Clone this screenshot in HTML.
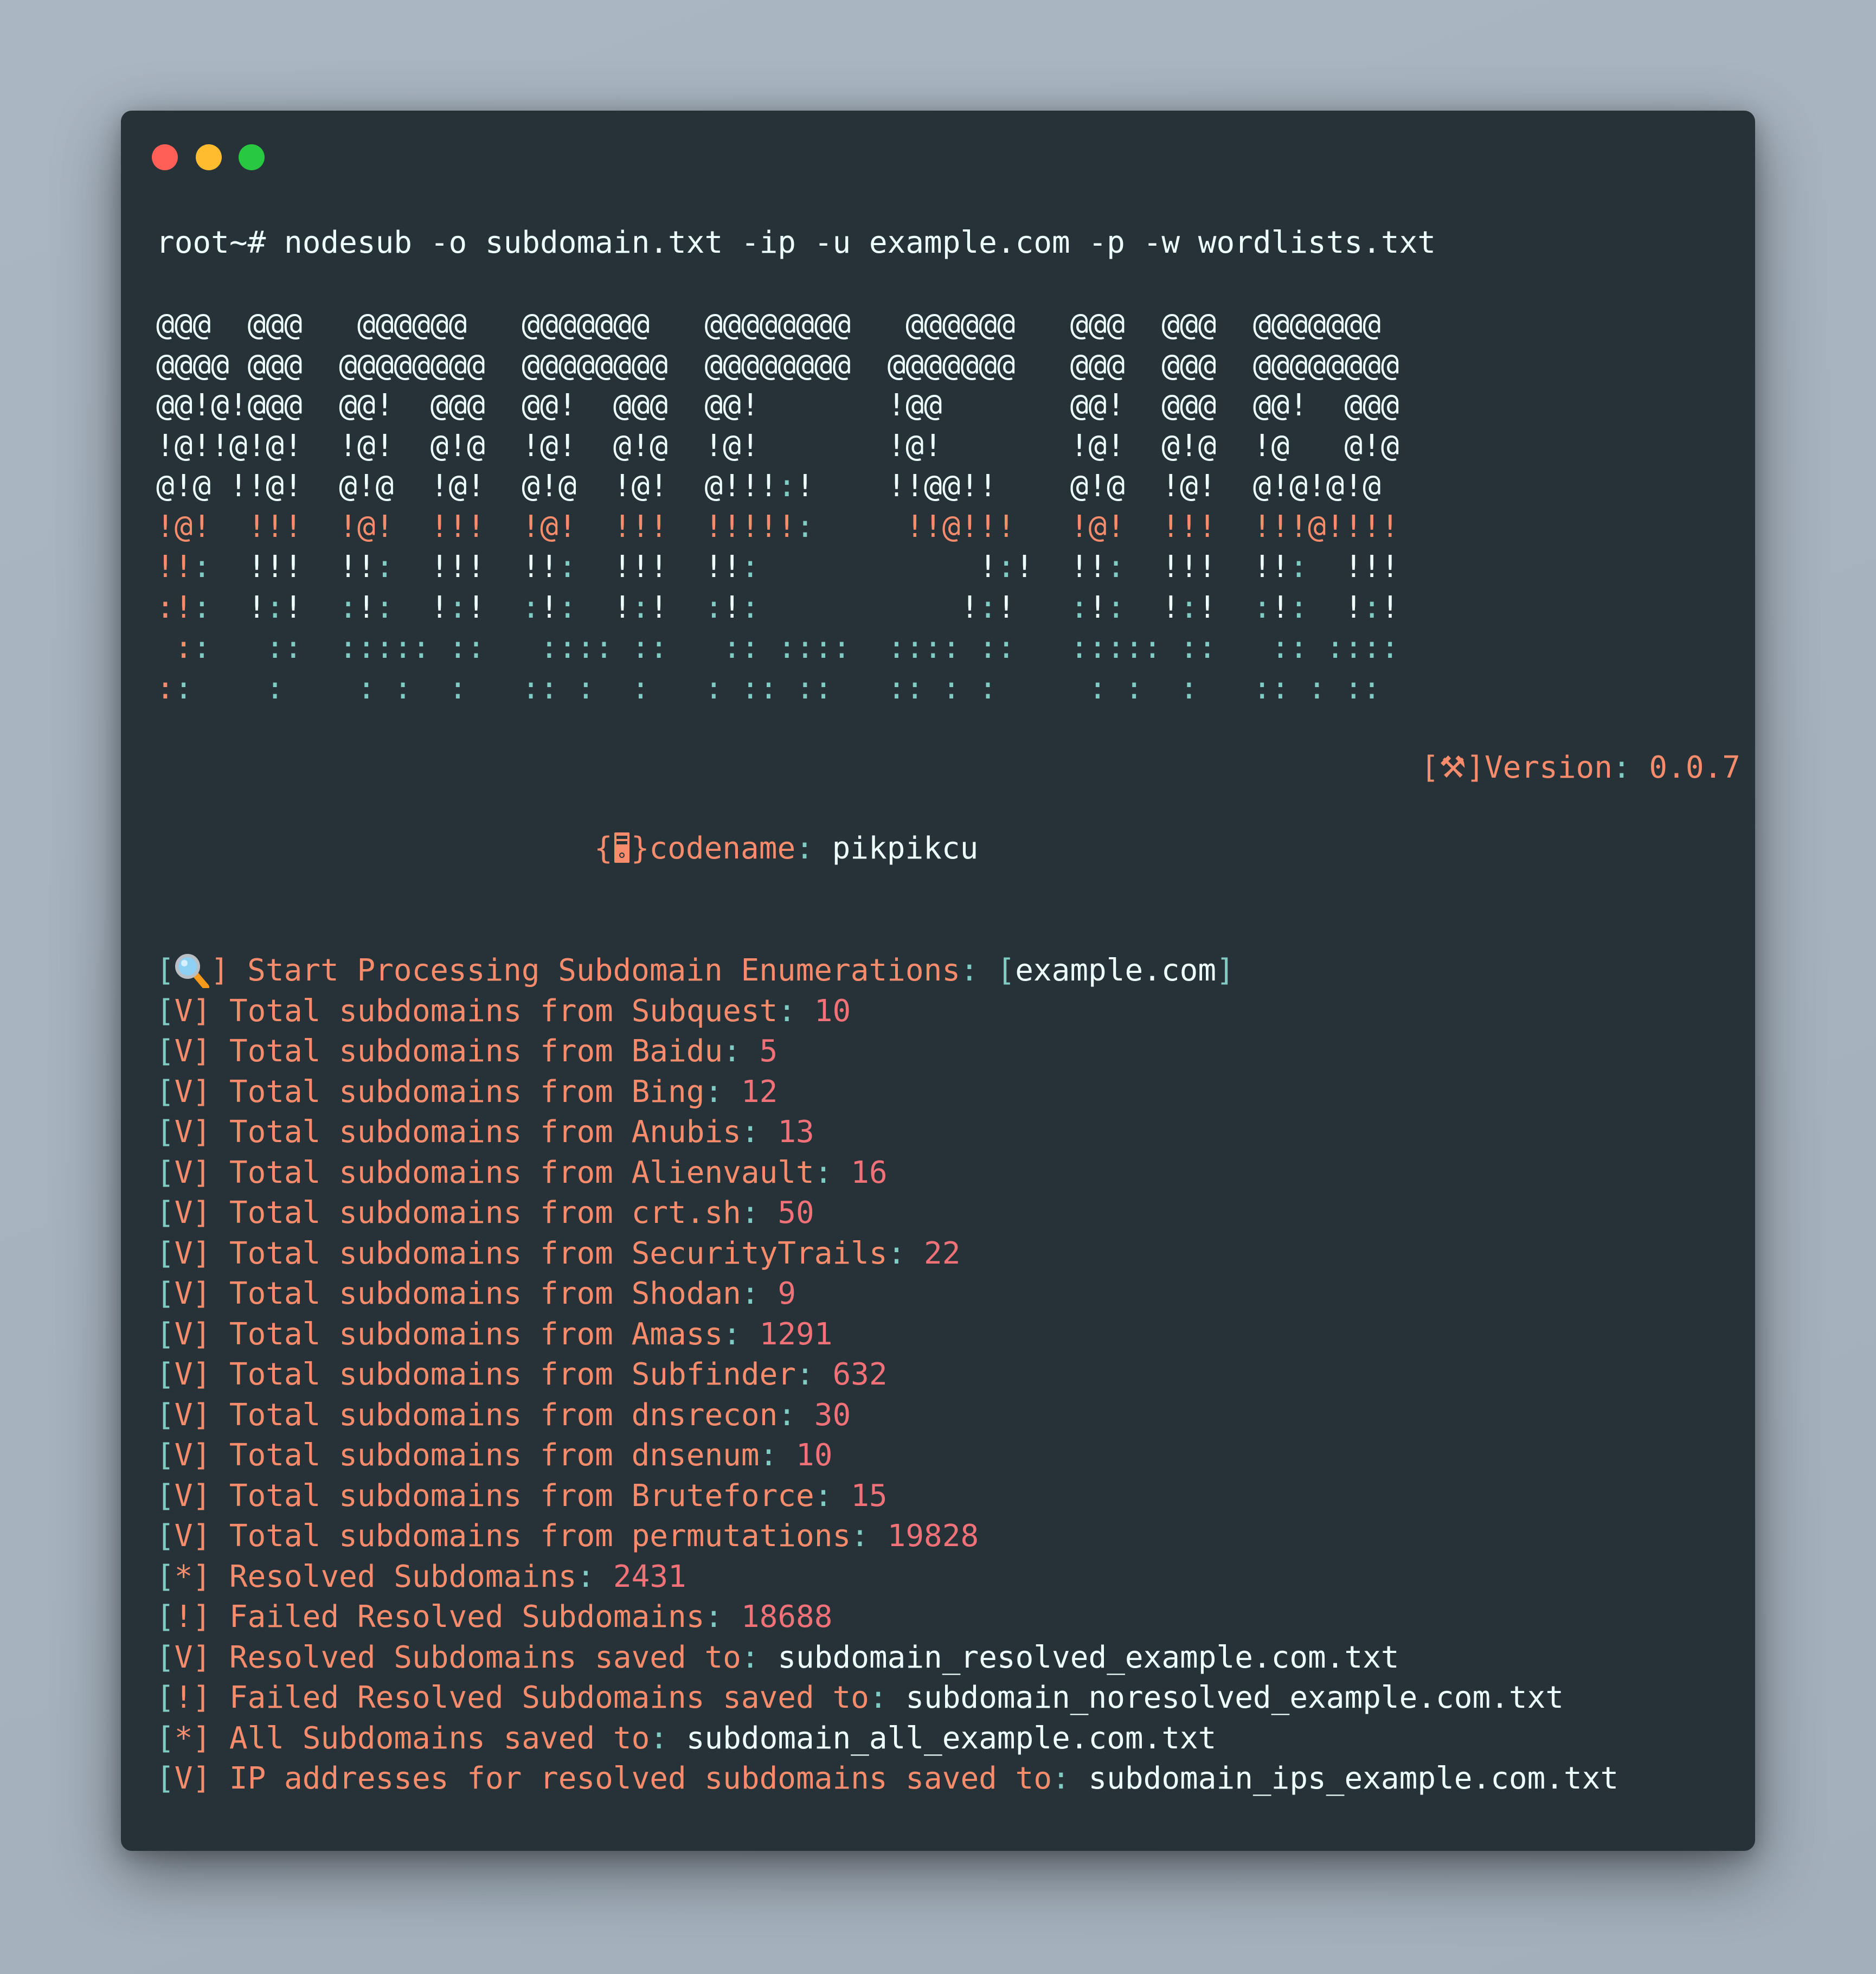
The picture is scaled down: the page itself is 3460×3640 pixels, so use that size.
<!DOCTYPE html>
<html><head><meta charset="utf-8"><style>
html,body{margin:0;padding:0}
body{width:3460px;height:3640px;background:linear-gradient(160deg,#aab6c2 0%,#a3afbb 100%);position:relative;overflow:hidden;font-family:"DejaVu Sans Mono","Liberation Mono",monospace;font-size:56px;}
.win{position:absolute;left:223px;top:204px;width:3014px;height:3209px;background:#263238;border-radius:20px;box-shadow:0 40px 120px rgba(0,0,0,0.45),0 10px 40px rgba(0,0,0,0.25);}
.dot{position:absolute;width:48px;height:48px;border-radius:50%;top:266px}
.t{position:absolute;white-space:pre;line-height:74.5px;color:#EEFFFF;}
.o{color:#F78C6C}.c{color:#80CBC4}.n{color:#F07178}.w{color:#EEFFFF}
</style></head><body>
<div class="win"></div>
<div class="dot" style="left:280px;background:#FF5F57"></div>
<div class="dot" style="left:361px;background:#FEBC2E"></div>
<div class="dot" style="left:440px;background:#28C840"></div>

<div class="t" style="left:288px;top:411px">root~# nodesub -o subdomain.txt -ip -u example.com -p -w wordlists.txt</div>

<div class="t" style="left:288px;top:562px">@@@  @@@   @@@@@@   @@@@@@@   @@@@@@@@   @@@@@@   @@@  @@@  @@@@@@@
@@@@ @@@  @@@@@@@@  @@@@@@@@  @@@@@@@@  @@@@@@@   @@@  @@@  @@@@@@@@
@@!@!@@@  @@!  @@@  @@!  @@@  @@!       !@@       @@!  @@@  @@!  @@@
!@!!@!@!  !@!  @!@  !@!  @!@  !@!       !@!       !@!  @!@  !@   @!@
@!@ !!@!  @!@  !@!  @!@  !@!  @!!!<span class="c">:</span>!    !!@@!!    @!@  !@!  @!@!@!@
<span class="o">!@!  !!!  !@!  !!!  !@!  !!!  !!!!!</span><span class="c">:</span><span class="o">     !!@!!!   !@!  !!!  !!!@!!!!</span>
<span class="o">!!</span><span class="c">:</span>  !!!  !!<span class="c">:</span>  !!!  !!<span class="c">:</span>  !!!  !!<span class="c">:</span>            !<span class="c">:</span>!  !!<span class="c">:</span>  !!!  !!<span class="c">:</span>  !!!
<span class="o">:!</span><span class="c">:</span>  !<span class="c">:</span>!  <span class="c">:</span>!<span class="c">:</span>  !<span class="c">:</span>!  <span class="c">:</span>!<span class="c">:</span>  !<span class="c">:</span>!  <span class="c">:</span>!<span class="c">:</span>           !<span class="c">:</span>!   <span class="c">:</span>!<span class="c">:</span>  !<span class="c">:</span>!  <span class="c">:</span>!<span class="c">:</span>  !<span class="c">:</span>!
 <span class="o">:</span><span class="c">:   ::  ::::: ::   :::: ::   :: ::::  :::: ::   ::::: ::   :: ::::</span>
<span class="o">:</span><span class="c">:    :    : :  :   :: :  :   : :: ::   :: : :     : :  :   :: : ::</span></div>

<div class="t o" style="right:250px;top:1379px">[<span style="font-family:'DejaVu Sans',sans-serif">⚒</span>]Version<span class="c">:</span> 0.0.7</div>

<div class="t o" style="left:1096px;top:1528px">{<svg width="34" height="56" viewBox="0 0 34 56" style="vertical-align:-8px"><rect x="3" y="0" width="28" height="56" rx="2" fill="#F78C6C"/><rect x="7" y="6" width="20" height="6" fill="#263238"/><rect x="7" y="16" width="20" height="6" fill="#263238"/><circle cx="17" cy="42" r="4" fill="none" stroke="#263238" stroke-width="2"/></svg>}codename<span class="c">:</span> <span class="w">pikpikcu</span></div>

<div class="t o" style="left:288px;top:1753px"><span class="c">[</span><svg width="67" height="64" viewBox="0 0 67 64" style="vertical-align:-14px"><line x1="36" y1="36" x2="58" y2="62" stroke="#F59A1B" stroke-width="12" stroke-linecap="round"/><circle cx="24" cy="24" r="20" fill="#8fd0f5" stroke="#b9bfc4" stroke-width="6"/><circle cx="18" cy="18" r="6" fill="#d8f0ff"/></svg>] Start Processing Subdomain Enumerations<span class="c">:</span> <span class="c">[</span><span class="w">example.com</span><span class="c">]</span>
<span class="c">[</span>V] Total subdomains from Subquest<span class="c">:</span> <span class="n">10</span>
<span class="c">[</span>V] Total subdomains from Baidu<span class="c">:</span> <span class="n">5</span>
<span class="c">[</span>V] Total subdomains from Bing<span class="c">:</span> <span class="n">12</span>
<span class="c">[</span>V] Total subdomains from Anubis<span class="c">:</span> <span class="n">13</span>
<span class="c">[</span>V] Total subdomains from Alienvault<span class="c">:</span> <span class="n">16</span>
<span class="c">[</span>V] Total subdomains from crt.sh<span class="c">:</span> <span class="n">50</span>
<span class="c">[</span>V] Total subdomains from SecurityTrails<span class="c">:</span> <span class="n">22</span>
<span class="c">[</span>V] Total subdomains from Shodan<span class="c">:</span> <span class="n">9</span>
<span class="c">[</span>V] Total subdomains from Amass<span class="c">:</span> <span class="n">1291</span>
<span class="c">[</span>V] Total subdomains from Subfinder<span class="c">:</span> <span class="n">632</span>
<span class="c">[</span>V] Total subdomains from dnsrecon<span class="c">:</span> <span class="n">30</span>
<span class="c">[</span>V] Total subdomains from dnsenum<span class="c">:</span> <span class="n">10</span>
<span class="c">[</span>V] Total subdomains from Bruteforce<span class="c">:</span> <span class="n">15</span>
<span class="c">[</span>V] Total subdomains from permutations<span class="c">:</span> <span class="n">19828</span>
<span class="c">[</span>*] Resolved Subdomains<span class="c">:</span> <span class="n">2431</span>
<span class="c">[</span>!] Failed Resolved Subdomains<span class="c">:</span> <span class="n">18688</span>
<span class="c">[</span>V] Resolved Subdomains saved to<span class="c">:</span> <span class="w">subdomain_resolved_example.com.txt</span>
<span class="c">[</span>!] Failed Resolved Subdomains saved to<span class="c">:</span> <span class="w">subdomain_noresolved_example.com.txt</span>
<span class="c">[</span>*] All Subdomains saved to<span class="c">:</span> <span class="w">subdomain_all_example.com.txt</span>
<span class="c">[</span>V] IP addresses for resolved subdomains saved to<span class="c">:</span> <span class="w">subdomain_ips_example.com.txt</span></div>
</body></html>
